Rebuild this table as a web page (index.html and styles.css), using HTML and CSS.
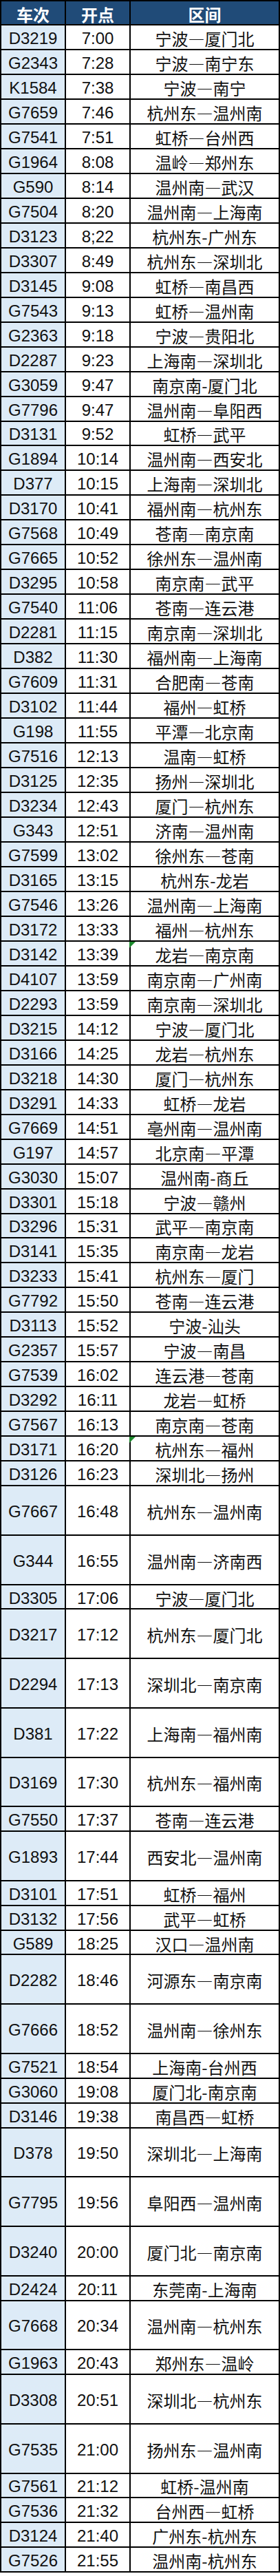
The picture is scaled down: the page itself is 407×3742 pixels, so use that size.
FILE: index.html
```html
<!DOCTYPE html>
<html lang="zh-CN">
<head>
<meta charset="utf-8">
<title>列车时刻表</title>
<link rel="stylesheet" href="styles.css">
</head>
<body>
<div class="sheet">
  <div class="row head"><div class="c">车次</div><div class="c">开点</div><div class="c">区间</div></div>
  <div class="row"><div class="c no">D3219</div><div class="c tm">7:00</div><div class="c rt">宁波—厦门北</div></div>
  <div class="row"><div class="c no">G2343</div><div class="c tm">7:28</div><div class="c rt">宁波—南宁东</div></div>
  <div class="row"><div class="c no">K1584</div><div class="c tm">7:38</div><div class="c rt">宁波—南宁</div></div>
  <div class="row"><div class="c no">G7659</div><div class="c tm">7:46</div><div class="c rt">杭州东—温州南</div></div>
  <div class="row"><div class="c no">G7541</div><div class="c tm">7:51</div><div class="c rt">虹桥—台州西</div></div>
  <div class="row"><div class="c no">G1964</div><div class="c tm">8:08</div><div class="c rt">温岭—郑州东</div></div>
  <div class="row"><div class="c no">G590</div><div class="c tm">8:14</div><div class="c rt">温州南—武汉</div></div>
  <div class="row"><div class="c no">G7504</div><div class="c tm">8:20</div><div class="c rt">温州南—上海南</div></div>
  <div class="row"><div class="c no">D3123</div><div class="c tm">8;22</div><div class="c rt">杭州东-广州东</div></div>
  <div class="row"><div class="c no">D3307</div><div class="c tm">8:49</div><div class="c rt">杭州东—深圳北</div></div>
  <div class="row"><div class="c no">D3145</div><div class="c tm">9:08</div><div class="c rt">虹桥—南昌西</div></div>
  <div class="row"><div class="c no">G7543</div><div class="c tm">9:13</div><div class="c rt">虹桥—温州南</div></div>
  <div class="row"><div class="c no">G2363</div><div class="c tm">9:18</div><div class="c rt">宁波—贵阳北</div></div>
  <div class="row"><div class="c no">D2287</div><div class="c tm">9:23</div><div class="c rt">上海南—深圳北</div></div>
  <div class="row"><div class="c no">G3059</div><div class="c tm">9:47</div><div class="c rt">南京南-厦门北</div></div>
  <div class="row"><div class="c no">G7796</div><div class="c tm">9:47</div><div class="c rt">温州南—阜阳西</div></div>
  <div class="row"><div class="c no">D3131</div><div class="c tm">9:52</div><div class="c rt">虹桥—武平</div></div>
  <div class="row"><div class="c no">G1894</div><div class="c tm">10:14</div><div class="c rt">温州南—西安北</div></div>
  <div class="row"><div class="c no">D377</div><div class="c tm">10:15</div><div class="c rt">上海南—深圳北</div></div>
  <div class="row"><div class="c no">D3170</div><div class="c tm">10:41</div><div class="c rt">福州南—杭州东</div></div>
  <div class="row"><div class="c no">G7568</div><div class="c tm">10:49</div><div class="c rt">苍南—南京南</div></div>
  <div class="row"><div class="c no">G7665</div><div class="c tm">10:52</div><div class="c rt">徐州东—温州南</div></div>
  <div class="row"><div class="c no">D3295</div><div class="c tm">10:58</div><div class="c rt">南京南—武平</div></div>
  <div class="row"><div class="c no">G7540</div><div class="c tm">11:06</div><div class="c rt">苍南—连云港</div></div>
  <div class="row"><div class="c no">D2281</div><div class="c tm">11:15</div><div class="c rt">南京南—深圳北</div></div>
  <div class="row"><div class="c no">D382</div><div class="c tm">11:30</div><div class="c rt">福州南—上海南</div></div>
  <div class="row"><div class="c no">G7609</div><div class="c tm">11:31</div><div class="c rt">合肥南—苍南</div></div>
  <div class="row"><div class="c no">D3102</div><div class="c tm">11:44</div><div class="c rt">福州—虹桥</div></div>
  <div class="row"><div class="c no">G198</div><div class="c tm">11:55</div><div class="c rt">平潭—北京南</div></div>
  <div class="row"><div class="c no">G7516</div><div class="c tm">12:13</div><div class="c rt">温南—虹桥</div></div>
  <div class="row"><div class="c no">D3125</div><div class="c tm">12:35</div><div class="c rt">扬州—深圳北</div></div>
  <div class="row"><div class="c no">D3234</div><div class="c tm">12:43</div><div class="c rt">厦门—杭州东</div></div>
  <div class="row"><div class="c no">G343</div><div class="c tm">12:51</div><div class="c rt">济南—温州南</div></div>
  <div class="row"><div class="c no">G7599</div><div class="c tm">13:02</div><div class="c rt">徐州东—苍南</div></div>
  <div class="row"><div class="c no">D3165</div><div class="c tm">13:15</div><div class="c rt">杭州东-龙岩</div></div>
  <div class="row"><div class="c no">G7546</div><div class="c tm">13:26</div><div class="c rt">温州南—上海南</div></div>
  <div class="row"><div class="c no">D3172</div><div class="c tm">13:33</div><div class="c rt">福州—杭州东</div></div>
  <div class="row"><div class="c no">D3142</div><div class="c tm">13:39</div><div class="c rt flag">龙岩—南京南</div></div>
  <div class="row"><div class="c no">D4107</div><div class="c tm">13:59</div><div class="c rt">南京南—广州南</div></div>
  <div class="row"><div class="c no">D2293</div><div class="c tm">13:59</div><div class="c rt">南京南—深圳北</div></div>
  <div class="row"><div class="c no">D3215</div><div class="c tm">14:12</div><div class="c rt">宁波—厦门北</div></div>
  <div class="row"><div class="c no">D3166</div><div class="c tm">14:25</div><div class="c rt">龙岩—杭州东</div></div>
  <div class="row"><div class="c no">D3218</div><div class="c tm">14:30</div><div class="c rt">厦门—杭州东</div></div>
  <div class="row"><div class="c no">D3291</div><div class="c tm">14:33</div><div class="c rt">虹桥—龙岩</div></div>
  <div class="row"><div class="c no">G7669</div><div class="c tm">14:51</div><div class="c rt">亳州南—温州南</div></div>
  <div class="row"><div class="c no">G197</div><div class="c tm">14:57</div><div class="c rt">北京南—平潭</div></div>
  <div class="row"><div class="c no">G3030</div><div class="c tm">15:07</div><div class="c rt">温州南-商丘</div></div>
  <div class="row"><div class="c no">D3301</div><div class="c tm">15:18</div><div class="c rt">宁波—赣州</div></div>
  <div class="row"><div class="c no">D3296</div><div class="c tm">15:31</div><div class="c rt">武平—南京南</div></div>
  <div class="row"><div class="c no">D3141</div><div class="c tm">15:35</div><div class="c rt">南京南—龙岩</div></div>
  <div class="row"><div class="c no">D3233</div><div class="c tm">15:41</div><div class="c rt">杭州东—厦门</div></div>
  <div class="row"><div class="c no">G7792</div><div class="c tm">15:50</div><div class="c rt">苍南—连云港</div></div>
  <div class="row"><div class="c no">D3113</div><div class="c tm">15:52</div><div class="c rt">宁波-汕头</div></div>
  <div class="row"><div class="c no">G2357</div><div class="c tm">15:57</div><div class="c rt">宁波—南昌</div></div>
  <div class="row"><div class="c no">G7539</div><div class="c tm">16:02</div><div class="c rt">连云港—苍南</div></div>
  <div class="row"><div class="c no">D3292</div><div class="c tm">16:11</div><div class="c rt">龙岩—虹桥</div></div>
  <div class="row"><div class="c no">G7567</div><div class="c tm">16:13</div><div class="c rt">南京南—苍南</div></div>
  <div class="row"><div class="c no">D3171</div><div class="c tm">16:20</div><div class="c rt flag">杭州东—福州</div></div>
  <div class="row"><div class="c no">D3126</div><div class="c tm">16:23</div><div class="c rt">深圳北—扬州</div></div>
  <div class="row tall"><div class="c no">G7667</div><div class="c tm">16:48</div><div class="c rt">杭州东—温州南</div></div>
  <div class="row tall"><div class="c no">G344</div><div class="c tm">16:55</div><div class="c rt">温州南—济南西</div></div>
  <div class="row late"><div class="c no">D3305</div><div class="c tm">17:06</div><div class="c rt">宁波—厦门北</div></div>
  <div class="row tall"><div class="c no">D3217</div><div class="c tm">17:12</div><div class="c rt">杭州东—厦门北</div></div>
  <div class="row tall"><div class="c no">D2294</div><div class="c tm">17:13</div><div class="c rt">深圳北—南京南</div></div>
  <div class="row tall"><div class="c no">D381</div><div class="c tm">17:22</div><div class="c rt">上海南—福州南</div></div>
  <div class="row tall"><div class="c no">D3169</div><div class="c tm">17:30</div><div class="c rt">杭州东—福州南</div></div>
  <div class="row late"><div class="c no">G7550</div><div class="c tm">17:37</div><div class="c rt">苍南—连云港</div></div>
  <div class="row tall"><div class="c no">G1893</div><div class="c tm">17:44</div><div class="c rt">西安北—温州南</div></div>
  <div class="row late"><div class="c no">D3101</div><div class="c tm">17:51</div><div class="c rt">虹桥—福州</div></div>
  <div class="row late"><div class="c no">D3132</div><div class="c tm">17:56</div><div class="c rt">武平—虹桥</div></div>
  <div class="row late"><div class="c no">G589</div><div class="c tm">18:25</div><div class="c rt">汉口—温州南</div></div>
  <div class="row tall"><div class="c no">D2282</div><div class="c tm">18:46</div><div class="c rt">河源东—南京南</div></div>
  <div class="row tall"><div class="c no">G7666</div><div class="c tm">18:52</div><div class="c rt">温州南—徐州东</div></div>
  <div class="row late"><div class="c no">G7521</div><div class="c tm">18:54</div><div class="c rt">上海南-台州西</div></div>
  <div class="row late"><div class="c no">G3060</div><div class="c tm">19:08</div><div class="c rt">厦门北-南京南</div></div>
  <div class="row late"><div class="c no">D3146</div><div class="c tm">19:38</div><div class="c rt">南昌西—虹桥</div></div>
  <div class="row tall"><div class="c no">D378</div><div class="c tm">19:50</div><div class="c rt">深圳北—上海南</div></div>
  <div class="row tall"><div class="c no">G7795</div><div class="c tm">19:56</div><div class="c rt">阜阳西—温州南</div></div>
  <div class="row tall"><div class="c no">D3240</div><div class="c tm">20:00</div><div class="c rt">厦门北—南京南</div></div>
  <div class="row late"><div class="c no">D2424</div><div class="c tm">20:11</div><div class="c rt">东莞南-上海南</div></div>
  <div class="row tall"><div class="c no">G7668</div><div class="c tm">20:34</div><div class="c rt">温州南—杭州东</div></div>
  <div class="row late"><div class="c no">G1963</div><div class="c tm">20:43</div><div class="c rt">郑州东—温岭</div></div>
  <div class="row tall"><div class="c no">D3308</div><div class="c tm">20:51</div><div class="c rt">深圳北—杭州东</div></div>
  <div class="row tall"><div class="c no">G7535</div><div class="c tm">21:00</div><div class="c rt">扬州东—温州南</div></div>
  <div class="row late"><div class="c no">G7561</div><div class="c tm">21:12</div><div class="c rt">虹桥-温州南</div></div>
  <div class="row late"><div class="c no">G7536</div><div class="c tm">21:32</div><div class="c rt">台州西—虹桥</div></div>
  <div class="row late"><div class="c no">D3124</div><div class="c tm">21:40</div><div class="c rt">广州东-杭州东</div></div>
  <div class="row late"><div class="c no">G7526</div><div class="c tm">21:55</div><div class="c rt">温州南-杭州东</div></div>
</div>
</body>
</html>
```

FILE: styles.css
```css
html, body {
  margin: 0;
  padding: 0;
  background: #fff;
}

.sheet {
  width: 407px;
  box-sizing: border-box;
  padding: 2px;
  background: #000;
  display: flex;
  flex-direction: column;
  gap: 2px;
}

.row {
  display: grid;
  grid-template-columns: 92px 92px 215px;
  gap: 2px;
  height: 33.98px;
}

.row.late {
  height: 33.86px;
}

.row.tall {
  height: 69.72px;
}

.row.head {
  height: 33px;
}

.c {
  display: flex;
  align-items: center;
  justify-content: center;
  box-sizing: border-box;
  padding-top: 4px;
  background: #fff;
  color: #111;
  font-size: 24px;
  line-height: 24px;
  white-space: nowrap;
  position: relative;
}

.head .c {
  background: #204b78;
  color: #fff;
  font-family: "Noto Sans CJK SC", sans-serif;
  font-weight: 700;
}

.no {
  background: #ddebf7;
  font-family: "Liberation Sans", Arial, sans-serif;
}

.tm {
  font-family: "Liberation Sans", Arial, sans-serif;
}

.rt {
  font-family: "Noto Sans CJK SC", sans-serif;
}

.flag::before {
  content: "";
  position: absolute;
  left: -2px;
  top: 0;
  width: 0;
  height: 0;
  border-top: 9px solid #1e8a2e;
  border-right: 9px solid transparent;
}
```
